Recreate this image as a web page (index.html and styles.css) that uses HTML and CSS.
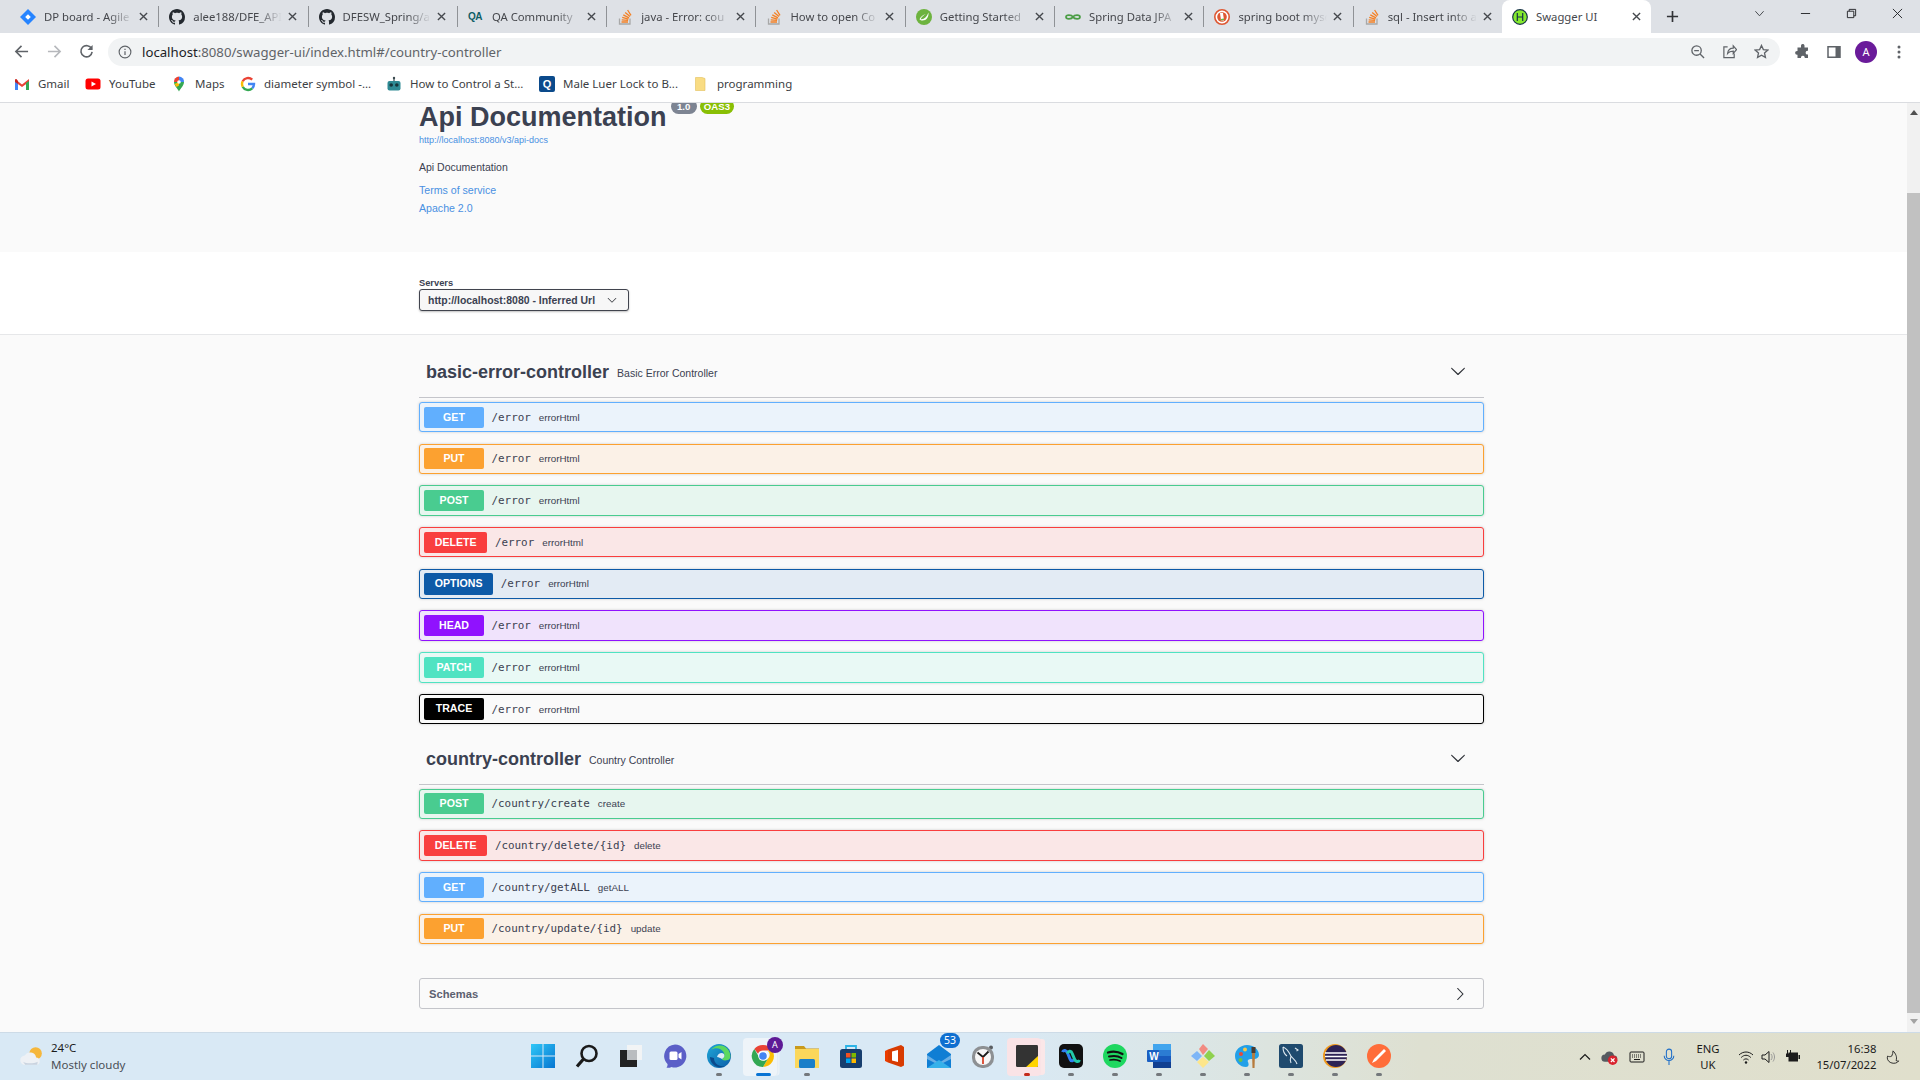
FILE: index.html
```html
<!DOCTYPE html>
<html lang="en">
<head>
<meta charset="utf-8">
<title>Swagger UI</title>
<link rel="stylesheet" href="styles.css">
</head>
<body>
<svg class="sprite" width="0" height="0">
  <defs>
    <symbol id="i-gh" viewBox="0 0 16 16"><path fill="#24292f" d="M8 0C3.58 0 0 3.58 0 8c0 3.54 2.29 6.53 5.47 7.59.4.07.55-.17.55-.38 0-.19-.01-.82-.01-1.49-2.01.37-2.53-.49-2.69-.94-.09-.23-.48-.94-.82-1.13-.28-.15-.68-.52-.01-.53.63-.01 1.08.58 1.23.82.72 1.21 1.87.87 2.33.66.07-.52.28-.87.51-1.07-1.78-.2-3.64-.89-3.64-3.95 0-.87.31-1.59.82-2.15-.08-.2-.36-1.02.08-2.12 0 0 .67-.21 2.2.82.64-.18 1.32-.27 2-.27s1.36.09 2 .27c1.53-1.04 2.2-.82 2.2-.82.44 1.1.16 1.92.08 2.12.51.56.82 1.27.82 2.15 0 3.07-1.87 3.75-3.65 3.95.29.25.54.73.54 1.48 0 1.07-.01 1.93-.01 2.2 0 .21.15.46.55.38A8.013 8.013 0 0016 8c0-4.42-3.58-8-8-8z"/></symbol>
    <symbol id="i-so" viewBox="0 0 16 16"><path fill="none" stroke="#a8a8a8" stroke-width="1.3" d="M2.5 9.5v5.5h10.5V9.5"/><path fill="none" stroke="#f48024" stroke-width="1.3" d="M4.5 13h6.5M4.7 10.8l6.4.6M5.2 8.4l6.2 1.7M6.3 5.9l5.7 3M8.2 3.4l4.8 4.2M10.6 1l3.4 5.4"/></symbol>
    <symbol id="i-x" viewBox="0 0 10 10"><path fill="none" stroke="#45484d" stroke-width="1.5" d="M1 1l8 8M9 1l-8 8"/></symbol>
    <symbol id="i-down" viewBox="0 0 20 20"><path fill="#2f3238" d="M17.418 6.109c.272-.268.709-.268.979 0s.271.701 0 .969l-7.908 7.83c-.27.268-.707.268-.979 0l-7.908-7.83c-.27-.268-.27-.701 0-.969.271-.268.709-.268.979 0L10 13.25l7.418-7.141z"/></symbol>
    <symbol id="i-right" viewBox="0 0 20 20"><path fill="#2f3238" d="M13.25 10L6.109 2.582c-.268-.27-.268-.707 0-.979.268-.27.701-.27.969 0l7.83 7.908c.268.271.268.709 0 .979l-7.83 7.908c-.268.271-.701.27-.969 0-.268-.269-.268-.707 0-.979L13.25 10z"/></symbol>
  </defs>
</svg>

<header class="tabstrip">
  <div class="tab"><svg class="fav" viewBox="0 0 16 16"><path fill="#2684ff" d="M8 0l8 8-8 8-8-8z"/><path fill="#fff" d="M8 5.2L10.8 8 8 10.8 5.2 8z"/></svg><span class="tab-title">DP board - Agile</span><svg class="tab-x"><use href="#i-x"/></svg></div>
  <div class="tab"><svg class="fav"><use href="#i-gh"/></svg><span class="tab-title">alee188/DFE_API</span><svg class="tab-x"><use href="#i-x"/></svg></div>
  <div class="tab"><svg class="fav"><use href="#i-gh"/></svg><span class="tab-title">DFESW_Spring/api</span><svg class="tab-x"><use href="#i-x"/></svg></div>
  <div class="tab"><span class="fav fav-qa">QA</span><span class="tab-title">QA Community</span><svg class="tab-x"><use href="#i-x"/></svg></div>
  <div class="tab"><svg class="fav"><use href="#i-so"/></svg><span class="tab-title">java - Error: cou</span><svg class="tab-x"><use href="#i-x"/></svg></div>
  <div class="tab"><svg class="fav"><use href="#i-so"/></svg><span class="tab-title">How to open Co</span><svg class="tab-x"><use href="#i-x"/></svg></div>
  <div class="tab"><svg class="fav" viewBox="0 0 16 16"><circle cx="8" cy="8" r="8" fill="#6db33f"/><path fill="#fff" d="M12.5 3.5c.3 4.5-2 8-6 8-1.3 0-2.2-.5-3-1.3 1-2.7 3.5-4.5 6.5-5-2.5 1-4.3 2.5-5.3 5 3.3.5 5.8-1.7 7.8-6.7z"/></svg><span class="tab-title">Getting Started</span><svg class="tab-x"><use href="#i-x"/></svg></div>
  <div class="tab"><svg class="fav" viewBox="0 0 16 16"><path fill="none" stroke="#4b9d45" stroke-width="1.7" d="M8 8C6.5 5.5 1 5.5 1 8s5.5 2.5 7 0 7-2.5 7 0-5.5 2.5-7 0z"/></svg><span class="tab-title">Spring Data JPA</span><svg class="tab-x"><use href="#i-x"/></svg></div>
  <div class="tab"><svg class="fav" viewBox="0 0 16 16"><circle cx="8" cy="8" r="7.2" fill="#fff" stroke="#de5833" stroke-width="1.6"/><circle cx="8" cy="8" r="4.8" fill="#de5833"/><path fill="#fff" d="M6 4h3l1 7.5H7z"/><path fill="#65bc46" d="M7 10l3-.6v1.6l-3 .4z"/></svg><span class="tab-title">spring boot mysql</span><svg class="tab-x"><use href="#i-x"/></svg></div>
  <div class="tab"><svg class="fav"><use href="#i-so"/></svg><span class="tab-title">sql - Insert into a</span><svg class="tab-x"><use href="#i-x"/></svg></div>
  <div class="tab tab-active"><svg class="fav" viewBox="0 0 16 16"><circle cx="8" cy="8" r="7.3" fill="#85ea2d" stroke="#173647" stroke-width="1.2"/><path fill="none" stroke="#173647" stroke-width="1.2" d="M5.3 4v8M10.7 4v8M5.3 8h5.4"/></svg><span class="tab-title">Swagger UI</span><svg class="tab-x"><use href="#i-x"/></svg></div>
  <svg class="newtab" viewBox="0 0 14 14"><path fill="none" stroke="#303236" stroke-width="1.8" d="M7 1v12M1 7h12"/></svg>
  <div class="winctl">
    <svg viewBox="0 0 12 12"><path fill="none" stroke="#3c3f44" d="M1.5 3.5L6 8.5l4.5-5"/></svg>
    <svg viewBox="0 0 12 12"><path fill="none" stroke="#202124" d="M1 6h10"/></svg>
    <svg viewBox="0 0 12 12"><path fill="none" stroke="#202124" d="M1.5 3.5h7v7h-7zM3.5 3.5v-2h7v7h-2"/></svg>
    <svg viewBox="0 0 12 12"><path fill="none" stroke="#202124" d="M1 1l10 10M11 1L1 11"/></svg>
  </div>
</header>

<div class="toolbar">
  <svg class="nav" viewBox="0 0 16 16"><path fill="none" stroke="#5f6368" stroke-width="1.7" d="M15 8H2M8 2L2 8l6 6"/></svg>
  <svg class="nav nav-fwd" viewBox="0 0 16 16"><path fill="none" stroke="#b6b8bc" stroke-width="1.7" d="M1 8h13M8 2l6 6-6 6"/></svg>
  <svg class="nav nav-reload" viewBox="0 0 16 16"><path fill="none" stroke="#5f6368" stroke-width="1.7" d="M13.4 5A6 6 0 1 0 14 8.5"/><path fill="#5f6368" d="M14.5 1v5.5H9z"/></svg>
  <div class="omnibox">
    <svg class="info-i" viewBox="0 0 16 16"><circle cx="8" cy="8" r="6.7" fill="none" stroke="#5f6368" stroke-width="1.3"/><path fill="#5f6368" d="M7.3 7h1.4v4.5H7.3zM7.3 4.3h1.4v1.4H7.3z"/></svg>
    <span class="url"><b>localhost</b>:8080/swagger-ui/index.html#/country-controller</span>
    <svg class="omni-act" viewBox="0 0 16 16"><circle cx="7" cy="7" r="5" fill="none" stroke="#5f6368" stroke-width="1.4"/><path fill="none" stroke="#5f6368" stroke-width="1.4" d="M10.7 10.7L15 15M4.5 7h5"/></svg>
    <svg class="omni-act" viewBox="0 0 16 16"><path fill="none" stroke="#5f6368" stroke-width="1.3" d="M6 3H2v11.5h11V10M6 10c.5-4 3-5.5 6-5.5V2l3.5 4-3.5 4V7.500c-2.500 0-4.500.5-6 2.500z"/></svg>
    <svg class="omni-act" viewBox="0 0 16 16"><path fill="none" stroke="#5f6368" stroke-width="1.4" d="M8 1.5l2 4.4 4.8.5-3.6 3.2 1 4.700L8 11.900l-4.200 2.400 1-4.700-3.600-3.200 4.800-.5z"/></svg>
  </div>
  <svg class="tool tool-ext" viewBox="0 0 16 16"><path fill="#5f6368" d="M6 1.5a1.8 1.8 0 0 1 3.5 0V3.5H13v3.3h-.5a1.9 1.9 0 0 0 0 3.8h.5V14H9.7v-.7a1.9 1.9 0 0 0-3.700 0v.7H2.500v-3.300H2a1.900 1.900 0 0 1 0-3.800h.5V3.500H6z"/></svg>
  <svg class="tool tool-side" viewBox="0 0 16 16"><path fill="none" stroke="#5f6368" stroke-width="1.5" d="M2 2.8h12v10.400H2z"/><path fill="#5f6368" d="M9.500 2.800H14v10.400H9.500z"/></svg>
  <span class="avatar">A</span>
  <svg class="tool" viewBox="0 0 16 16"><g fill="#5f6368"><circle cx="8" cy="3" r="1.5"/><circle cx="8" cy="8" r="1.5"/><circle cx="8" cy="13" r="1.5"/></g></svg>
</div>

<nav class="bookmarks">
  <span class="bm bm-gmail"><svg viewBox="0 0 16 16"><path fill="#ea4335" d="M1 3l7 5.5L15 3v3L8 11 1 6z"/><path fill="#4285f4" d="M1 5v9h3V7z"/><path fill="#34a853" d="M15 5v9h-3V7z"/><path fill="#c5221f" d="M1 3.8V6l3 2V5L2.5 3z"/></svg>Gmail</span>
  <span class="bm bm-yt"><svg viewBox="0 0 16 16"><rect x=".5" y="2.5" width="15" height="11" rx="2.5" fill="#f00"/><path fill="#fff" d="M6.5 5.500L11 8l-4.500 2.500z"/></svg>YouTube</span>
  <span class="bm bm-maps"><svg viewBox="0 0 16 16"><path fill="#34a853" d="M8 15.500C6.500 12.500 3 9.500 3 6h10c0 3.500-3.500 6.500-5 9.500z"/><path fill="#4285f4" d="M8 .5A5 5 0 0 1 13 6H8z"/><path fill="#ea4335" d="M8 .5A5 5 0 0 0 3 6h5z"/><path fill="#fbbc04" d="M3.500 8L8 6v3.500L5.500 11z"/><circle cx="8" cy="6" r="1.800" fill="#fff"/></svg>Maps</span>
  <span class="bm bm-g"><svg viewBox="0 0 16 16"><path fill="none" stroke="#4285f4" stroke-width="2.4" d="M8 8h6a6 6 0 0 1-1.800 4.300"/><path fill="none" stroke="#34a853" stroke-width="2.4" d="M12.200 12.300A6 6 0 0 1 2.700 10.700"/><path fill="none" stroke="#fbbc05" stroke-width="2.4" d="M2.700 10.700a6 6 0 0 1 0-5.400"/><path fill="none" stroke="#ea4335" stroke-width="2.4" d="M2.700 5.300A6 6 0 0 1 12.200 3.700"/></svg>diameter symbol -...</span>
  <span class="bm bm-robot"><svg viewBox="0 0 16 16"><path fill="none" stroke="#3b4a4f" stroke-width="1.2" d="M8 5V2"/><circle cx="8" cy="2" r="1.2" fill="#3b4a4f"/><rect x="1.5" y="5" width="13" height="9.5" rx="2" fill="#2e8a94"/><circle cx="5.2" cy="9" r="1.8" fill="#16343a"/><circle cx="10.8" cy="9" r="1.8" fill="#16343a"/></svg>How to Control a St...</span>
  <span class="bm bm-q"><span class="q-ico">Q</span>Male Luer Lock to B...</span>
  <span class="bm bm-folder"><svg viewBox="0 0 16 16"><path fill="#f9dc83" stroke="#e2bf5b" stroke-width=".6" d="M2.500 1.500h6.500l3 1v12h-9.500z"/></svg>programming</span>
</nav>

<div class="viewport">
  <main class="page">
    <section class="info">
      <div class="wrap">
        <div class="title-row">
          <h1 class="title">Api Documentation</h1>
          <span class="pill pill-ver">1.0</span>
          <span class="pill pill-oas">OAS3</span>
        </div>
        <a class="spec-url">http://localhost:8080/v3/api-docs</a>
        <p class="desc">Api Documentation</p>
        <a class="link link-terms">Terms of service</a>
        <a class="link link-lic">Apache 2.0</a>
      </div>
    </section>

    <section class="schemes">
      <div class="wrap">
        <div class="servers-label">Servers</div>
        <div class="select">http://localhost:8080 - Inferred Url<svg class="select-arrow"><use href="#i-down"/></svg></div>
      </div>
    </section>

    <section class="ops wrap">
      <div class="tag tag-first">
        <h3 class="tag-name">basic-error-controller</h3>
        <span class="tag-desc">Basic Error Controller</span>
        <svg class="tag-arrow"><use href="#i-down"/></svg>
      </div>
      <div class="op op-get"><span class="method">GET</span><span class="path">/error</span><span class="opid">errorHtml</span></div>
      <div class="op op-put"><span class="method">PUT</span><span class="path">/error</span><span class="opid">errorHtml</span></div>
      <div class="op op-post"><span class="method">POST</span><span class="path">/error</span><span class="opid">errorHtml</span></div>
      <div class="op op-delete"><span class="method">DELETE</span><span class="path">/error</span><span class="opid">errorHtml</span></div>
      <div class="op op-options"><span class="method">OPTIONS</span><span class="path">/error</span><span class="opid">errorHtml</span></div>
      <div class="op op-head"><span class="method">HEAD</span><span class="path">/error</span><span class="opid">errorHtml</span></div>
      <div class="op op-patch"><span class="method">PATCH</span><span class="path">/error</span><span class="opid">errorHtml</span></div>
      <div class="op op-trace"><span class="method">TRACE</span><span class="path">/error</span><span class="opid">errorHtml</span></div>

      <div class="tag">
        <h3 class="tag-name">country-controller</h3>
        <span class="tag-desc">Country Controller</span>
        <svg class="tag-arrow"><use href="#i-down"/></svg>
      </div>
      <div class="op op-post"><span class="method">POST</span><span class="path">/country/create</span><span class="opid">create</span></div>
      <div class="op op-delete"><span class="method">DELETE</span><span class="path">/country/delete/{id}</span><span class="opid">delete</span></div>
      <div class="op op-get"><span class="method">GET</span><span class="path">/country/getALL</span><span class="opid">getALL</span></div>
      <div class="op op-put"><span class="method">PUT</span><span class="path">/country/update/{id}</span><span class="opid">update</span></div>

      <div class="schemas"><span>Schemas</span><svg class="schemas-arrow"><use href="#i-right"/></svg></div>
    </section>
  </main>
  <aside class="scrollbar">
    <span class="sb-up"></span>
    <span class="sb-thumb"></span>
    <span class="sb-down"></span>
  </aside>
</div>

<footer class="taskbar">
  <div class="weather">
    <svg class="weather-ico" viewBox="0 0 24 24"><circle cx="15" cy="9" r="6" fill="#f6b73c"/><path fill="#eef1f5" d="M5 20a4.500 4.500 0 0 1-.5-9 6 6 0 0 1 11 2 3.600 3.600 0 0 1 1 7z"/><path fill="#c9d3df" d="M3 17c3 2 10 2 14 0l-.5 3H5z"/></svg>
    <div class="weather-text"><span class="w-temp">24°C</span><span class="w-desc">Mostly cloudy</span></div>
  </div>
  <div class="tb-icons">
    <div class="tb"><svg viewBox="0 0 24 24"><defs><linearGradient id="gw" x1="0" y1="0" x2="1" y2="1"><stop offset="0" stop-color="#2fc7f7"/><stop offset="1" stop-color="#0776d1"/></linearGradient></defs><path fill="url(#gw)" d="M0 0h11.500v11.500H0zM12.500 0H24v11.500H12.500zM0 12.500h11.500V24H0zM12.500 12.500H24V24H12.500z"/></svg></div>
    <div class="tb"><svg viewBox="0 0 24 24"><circle cx="14" cy="9.500" r="7.500" fill="none" stroke="#1a1a1a" stroke-width="2.600"/><path stroke="#1a1a1a" stroke-width="3.200" d="M8.500 15L2 22.500"/></svg></div>
    <div class="tb"><svg viewBox="0 0 24 24"><rect x="8" y="1" width="15" height="15" fill="#f2f4f5"/><rect x="1" y="6" width="17" height="17" fill="#222"/><rect x="8" y="6" width="10" height="10" fill="#b9bcbf"/></svg></div>
    <div class="tb"><svg viewBox="0 0 24 24"><path fill="#5b5fc7" d="M12 .5a11.500 11.500 0 1 1-3.500 22.500c-2 1-4 1-5 .5 1-1 1.200-2.200 1-3.500A11.500 11.500 0 0 1 12 .5z"/><rect x="6.500" y="7.500" width="8" height="8.500" rx="1.500" fill="#fff"/><path fill="#fff" d="M15.500 10l3-2v7.500l-3-2z"/></svg></div>
    <div class="tb has-dot"><svg viewBox="0 0 24 24"><defs><linearGradient id="ge" x1="0" y1="0" x2="1" y2="1"><stop offset="0" stop-color="#1fa7d8"/><stop offset="1" stop-color="#0b5da8"/></linearGradient></defs><circle cx="12" cy="12" r="12" fill="url(#ge)"/><path fill="#5cd85f" d="M4 6c5-6 14-6 18 1 2 4 2 8-1 9-4 1-6 0-6-1 2-1 3-3 2-6-2-5-9-6-13-3z"/><path fill="#dcebf5" d="M10 13c1-4 5-5 7-3 1 2 0 4-2 5-2-1-3-2-5-2z"/><path fill="#0a4a8c" d="M7 14c0 5 4 9 11 8-7 4-15-2-15-9z"/></svg><i class="dot"></i></div>
    <div class="tb tb-active"><svg viewBox="0 0 24 24"><path fill="#ea4335" d="M12 1a11 11 0 0 1 9.500 5.500H12a5.500 5.500 0 0 0-5 3.300L3.300 5A11 11 0 0 1 12 1z"/><path fill="#fbbc04" d="M21.500 6.500A11 11 0 0 1 12 23l4.700-8a5.500 5.500 0 0 0 0-8.500z"/><path fill="#34a853" d="M3.300 5L8 13a5.500 5.500 0 0 0 8.700 2L12 23A11 11 0 0 1 3.300 5z"/><circle cx="12" cy="12" r="4.800" fill="#fff"/><circle cx="12" cy="12" r="3.800" fill="#4285f4"/></svg><span class="tb-badge tb-badge-a">A</span><i class="dot dot-active"></i></div>
    <div class="tb has-dot"><svg viewBox="0 0 24 24"><path fill="#c99a1c" d="M0 2h9l2 2.500h13V8H0z"/><path fill="#fbd75b" d="M0 5h24v19H0z"/><rect x="4" y="15" width="16" height="9" rx="1.500" fill="#1a7fc9"/></svg><i class="dot"></i></div>
    <div class="tb"><svg viewBox="0 0 24 24"><path fill="none" stroke="#2cb3e6" stroke-width="1.800" d="M7 6V2h10v4"/><rect x="1" y="5" width="22" height="19" rx="2.500" fill="#173e6e"/><path fill="#f25022" d="M7 9h4.500v4.500H7z"/><path fill="#7fba00" d="M12.500 9H17v4.500h-4.500z"/><path fill="#00a4ef" d="M7 14.500h4.500V19H7z"/><path fill="#ffb900" d="M12.500 14.500H17V19h-4.500z"/></svg></div>
    <div class="tb"><svg viewBox="0 0 24 24"><path fill="#d83b01" d="M18 1L5 5.500v13L18 23l3-1.500V3z"/><path fill="#eb3c00" d="M5 5.500V18.500L2 17V7z"/><path fill="#fff" d="M9 7.500l6-1.500v12l-6-1.500z"/></svg></div>
    <div class="tb"><svg viewBox="0 0 24 24"><path fill="#0f7ed4" d="M0 10L12 1l12 9v14H0z"/><path fill="#d6eafb" d="M0 11l12 8 12-8v4l-12 6-12-6z" opacity=".45"/><path fill="#35b1ea" d="M0 24l12-8 12 8z"/></svg><span class="tb-badge tb-badge-n">53</span></div>
    <div class="tb"><svg viewBox="0 0 24 24"><circle cx="20" cy="3.500" r="2" fill="#5a5d61"/><rect x="1" y="2" width="22" height="22" rx="10" fill="#8d9093"/><circle cx="12" cy="13" r="8" fill="#f7f7f7"/><path fill="none" stroke="#1b1b1b" stroke-width="1.800" d="M6.500 8.500L12 13l5.500-5.500"/><path fill="none" stroke="#d8442a" stroke-width="1.800" d="M12 13v7"/></svg></div>
    <div class="tb tb-sticky"><svg viewBox="0 0 24 24"><rect x="0" y="0" width="24" height="24" rx="1.500" fill="#333"/><path fill="#ffd400" d="M11 24L24 12v10.500a1.500 1.500 0 0 1-1.500 1.500z"/></svg><i class="dot dot-red"></i></div>
    <div class="tb has-dot"><svg viewBox="0 0 24 24"><rect width="24" height="24" rx="5" fill="#111"/><path fill="none" stroke="#2f7ff2" stroke-width="3" d="M3.500 8c1-2.500 4-2 5 1l2.500 6c1 3 4 2 4.500-.5"/><path fill="none" stroke="#22c9a9" stroke-width="3" d="M20.500 16c-1 2.500-4 2-5-1L13 9c-1-3-4-2-4.500.5"/></svg><i class="dot"></i></div>
    <div class="tb has-dot"><svg viewBox="0 0 24 24"><circle cx="12" cy="12" r="12" fill="#1ed760"/><path fill="none" stroke="#111" stroke-linecap="round" stroke-width="2.300" d="M5 8.500c5-1.500 10-1 14.500 1.500"/><path fill="none" stroke="#111" stroke-linecap="round" stroke-width="2" d="M6 12.500c4.500-1 9-.8 12.500 1.500"/><path fill="none" stroke="#111" stroke-linecap="round" stroke-width="1.700" d="M7 16c3.500-.8 7-.5 10 1"/></svg><i class="dot"></i></div>
    <div class="tb has-dot tb-word"><svg viewBox="0 0 24 24"><path fill="#41a5ee" d="M6 0h18v6H6z"/><path fill="#2b7cd3" d="M6 6h18v6H6z"/><path fill="#185abd" d="M6 12h18v6H6z"/><path fill="#103f91" d="M6 18h18v6H6z"/><rect y="6" width="12" height="12" rx="1" fill="#1a5fc2"/></svg><span class="word-w">W</span><i class="dot"></i></div>
    <div class="tb has-dot"><svg viewBox="0 0 24 24"><path fill="#f28b82" d="M12 0l5 5-5 6-4-6z"/><path fill="#8fd14f" d="M18 6l6 6-6 5-5-5z"/><path fill="#7db6f7" d="M6 7l5 5-5 5-6-5z"/><path fill="#fde68a" d="M12 13l6 5-6 6-6-6z"/></svg><i class="dot"></i></div>
    <div class="tb has-dot"><svg viewBox="0 0 24 24"><path fill="#22a0e8" d="M12 1C5 1 0 6 0 12s5 11 11 11c3 0 3-3 2-5-1-2 1-3 3-3h3c3 0 5-2 5-4C24 5 18 1 12 1z"/><circle cx="6" cy="10" r="2" fill="#e64a3a"/><circle cx="10" cy="5.500" r="2" fill="#f7c948"/><circle cx="5.500" cy="16" r="2" fill="#6cc04a"/><path fill="#b77b3c" d="M17 9h3l-.5 15H17.500z"/><path fill="#4b3a2f" d="M16.500 3h4v6h-4z"/></svg><i class="dot"></i></div>
    <div class="tb has-dot"><svg viewBox="0 0 24 24"><rect width="24" height="24" rx="2.500" fill="#1f4a6e"/><path fill="none" stroke="#dfe9f0" stroke-width="1.100" d="M4 3c3 1 6 5 8 9 2 3 5 4 6 8M4 3c0 4 1 7 4 9M12 12c-1 3-1 5 0 7M16 4l3 2-1.500 1"/></svg><i class="dot"></i></div>
    <div class="tb has-dot"><svg viewBox="0 0 24 24"><circle cx="12" cy="12" r="12" fill="#f09a1f"/><circle cx="13" cy="12" r="11" fill="#2c2255"/><path fill="none" stroke="#fff" stroke-width="1.700" d="M2 9h22M2 12.500h22M3 16h20"/></svg><i class="dot"></i></div>
    <div class="tb has-dot"><svg viewBox="0 0 24 24"><circle cx="12" cy="12" r="12" fill="#ff6d3a"/><path fill="#fff" d="M17 5l2 2L9 17l-4 2 2-4z"/></svg><i class="dot"></i></div>
  </div>
  <div class="tray">
    <svg class="t-chev" viewBox="0 0 12 12"><path fill="none" stroke="#1b1b1b" stroke-width="1.200" d="M1 8.500L6 3.500l5 5"/></svg>
    <span class="t-cloud"><svg viewBox="0 0 16 16"><path fill="#555a60" d="M4 13a3.500 3.500 0 0 1-.3-7 4.500 4.500 0 0 1 8.600 1 3 3 0 0 1 0 6z"/><circle cx="11" cy="11.500" r="4.500" fill="#d9232e"/><path stroke="#fff" stroke-width="1.200" d="M9.300 9.800l3.400 3.400M12.700 9.800l-3.400 3.400"/></svg></span>
    <svg class="t-kbd" viewBox="0 0 16 16"><rect x="1" y="3" width="14" height="10" rx="1" fill="none" stroke="#1b1b1b"/><path stroke="#1b1b1b" stroke-dasharray="1 1" d="M3 6h10M3 8h10"/><path stroke="#1b1b1b" d="M5 10.500h6"/></svg>
    <svg class="t-mic" viewBox="0 0 16 20"><rect x="5" y="1" width="6" height="11" rx="3" fill="none" stroke="#1f6fc9" stroke-width="1.200"/><path fill="none" stroke="#1f6fc9" stroke-width="1.200" d="M2.500 8.500a5.500 5.500 0 0 0 11 0M8 14v5"/></svg>
    <div class="lang"><span>ENG</span><span>UK</span></div>
    <svg class="t-wifi" viewBox="0 0 16 16"><path fill="none" stroke="#1b1b1b" d="M1 6c4-4 10-4 14 0M3.200 8.500c3-3 6.600-3 9.600 0M5.400 11c1.500-1.500 3.700-1.500 5.200 0"/><circle cx="8" cy="13.500" r="1.200" fill="#1b1b1b"/></svg>
    <svg class="t-vol" viewBox="0 0 16 16"><path fill="none" stroke="#1b1b1b" d="M2 6h3l4-3.500v11L5 10H2z"/><path fill="none" stroke="#9a9a98" d="M11 5c1.500 2 1.500 4 0 6M13 3.500c2 3 2 6 0 9"/></svg>
    <svg class="t-bat" viewBox="0 0 16 16"><rect x="4" y="3.500" width="9.500" height="9" fill="#1b1b1b"/><rect x="14" y="6" width="1.500" height="4" fill="#1b1b1b"/><path stroke="#1b1b1b" d="M3 1v4M6 1v4"/><path fill="#1b1b1b" d="M1.500 4.500h6V8h-6z"/></svg>
    <div class="clock"><span>16:38</span><span>15/07/2022</span></div>
    <svg class="t-moon" viewBox="0 0 16 16"><path fill="none" stroke="#1b1b1b" d="M8 1c3 3 5 7 3.500 11 1 .7 2 .8 3 .5C13 15 9 16 5.500 14.500 2 13 .8 9.500 1.800 7 3 7.500 5 8 6.500 7 7.500 5 8 3 8 1z"/></svg>
  </div>
</footer>
</body>
</html>
```

FILE: styles.css
```css
* { box-sizing: border-box; }
html, body { margin: 0; height: 100%; }
body {
  width: 1920px; height: 1080px; overflow: hidden;
  display: flex; flex-direction: column;
  font-family: "Liberation Sans", Arial, sans-serif;
  color: #3b4151; background: #fafafa;
}
.sprite { position: absolute; }
h1, h3, p { margin: 0; }

/* ---- browser chrome ---- */
.tabstrip {
  height: 33px; flex: none; background: #dee1e6;
  display: flex; align-items: center; padding-left: 10px;
  font-family: "Noto Sans", "Open Sans", sans-serif;
}
.tab {
  width: 149.3px; height: 100%; flex: none;
  display: flex; align-items: center; padding: 0 10.5px 0 10px;
  border-right: 1px solid #8f9296;
  border-image: linear-gradient(#dee1e6 7px, #8f9296 7px, #8f9296 26px, #dee1e6 26px) 1;
}
.tab-active {
  background: #fff; border: 0; border-radius: 8px 8px 0 0;
  margin-left: -1px; height: 33px; align-self: flex-end;
}
.tab:nth-child(10) { border-right: 0; }
.fav { width: 16px; height: 16px; flex: none; margin-right: 8px; }
.fav-qa { font: bold 10px/16px "Liberation Sans", sans-serif; color: #0f5e66; letter-spacing: -.5px; }
.tab-title {
  flex: 1; min-width: 0; font-size: 11.3px; color: #45474c; white-space: nowrap; overflow: hidden;
  -webkit-mask-image: linear-gradient(90deg, #000 72%, transparent 100%);
  mask-image: linear-gradient(90deg, #000 72%, transparent 100%);
}
.tab-active .tab-title { -webkit-mask-image: none; mask-image: none; }
.tab-x { width: 9px; height: 9px; flex: none; margin-left: 6px; }
.newtab { width: 13px; height: 13px; flex: none; margin-left: 15px; }
.winctl { margin-left: auto; display: flex; align-items: center; width: 179px; padding-left: 13px; margin-top: -6px; }
.winctl svg { width: 11px; height: 11px; margin-left: 35px; flex: none; }
.winctl svg:first-child { margin-left: 0; }

.toolbar {
  height: 37px; flex: none; background: #fff;
  display: flex; align-items: center; padding-left: 14px;
}
.nav { width: 15px; height: 15px; flex: none; margin-right: 18px; }
.nav-fwd { margin-right: 17px; }
.nav-reload { margin-right: 14px; }
.omnibox {
  width: 1672px; height: 28px; flex: none; border-radius: 14px; background: #f1f3f4;
  display: flex; align-items: center; padding: 0 11px 0 10px;
  margin-right: 15px;
}
.info-i { width: 14px; height: 14px; flex: none; margin-right: 10px; }
.url { font: 13.2px "Noto Sans", sans-serif; color: #5f6368; flex: 1; white-space: nowrap; }
.url b { font-weight: 400; color: #202124; }
.omni-act { width: 15px; height: 15px; flex: none; margin-left: 17px; }
.tool { width: 16px; height: 16px; flex: none; margin-right: 16px; }
.tool-ext { margin-right: 15px; }
.tool-side { margin-right: 13px; }
.avatar {
  width: 22px; height: 22px; flex: none; border-radius: 50%; background: #6a1b9a; color: #fff;
  font: 11px/22px "Noto Sans", sans-serif; text-align: center; margin-right: 14px;
}

.bookmarks {
  height: 33px; flex: none; background: #fff; border-bottom: 1px solid #dadce0;
  display: flex; align-items: center; padding: 0 0 5px 14px;
  font: 11.5px "Noto Sans", sans-serif; color: #3c4043;
}
.bm { display: flex; align-items: center; white-space: nowrap; }
.bm svg, .q-ico { width: 16px; height: 16px; flex: none; margin-right: 8px; }
.q-ico { background: #0b4a8b; color: #fff; font: bold 11px/16px "Liberation Sans", sans-serif; text-align: center; border-radius: 2px; }
.bm-gmail { width: 71px; }
.bm-yt { width: 86px; }
.bm-maps { width: 69px; }
.bm-g { width: 146px; }
.bm-robot { width: 153px; }
.bm-q { width: 154px; }

/* ---- page ---- */
.viewport { flex: 1; min-height: 0; display: flex; background: #fafafa; }
.page { flex: 1; min-width: 0; overflow: hidden; }
.wrap { width: 1065px; margin-left: 419px; }
.info { height: 149px; background: #fafafa; }
.title-row { display: flex; height: 24px; align-items: flex-start; }
.title { font-size: 27px; line-height: 28px; margin-top: 0; font-weight: 700; color: #3b4151; white-space: nowrap; }
.pill {
  height: 15px; margin-top: -4px; border-radius: 8px; color: #fff;
  font: bold 9.6px/15px "Liberation Sans", sans-serif; margin-left: 3px;
}
.pill-ver { background: #7d8492; margin-left: 4px; padding: 0 6.5px; }
.pill-oas { background: #89bf04; padding: 0 4px; }
.spec-url { display: block; margin-top: 7px; font-size: 9px; line-height: 12px; color: #4990e2; }
.desc { margin-top: 14px; font-size: 10.5px; line-height: 14px; color: #3b4151; }
.link { display: block; font-size: 10.6px; line-height: 14px; color: #4990e2; }
.link-terms { margin-top: 9px; }
.link-lic { margin-top: 4px; }

.schemes { height: 83px; background: #fff; border-bottom: 1px solid #e6e7e9; padding-top: 25px; }
.servers-label { font-size: 9.3px; line-height: 12px; font-weight: 700; color: #3b4151; }
.select {
  width: 210px; height: 22px; border: 1.5px solid #41444e; border-radius: 3px; background: #f7f7f7;
  box-shadow: 0 1px 2px rgba(0,0,0,.25);
  display: flex; align-items: center; padding-left: 8px;
  font-size: 10.45px; font-weight: 700; color: #3b4151; white-space: nowrap;
}
.select-arrow { width: 10px; height: 10px; margin-left: auto; margin-right: 11px; }

.tag {
  display: flex; align-items: center; height: 38px; padding: 0 21px 13px 7px;
  border-bottom: 1px solid #c4c5ca; margin-top: 22.7px; margin-bottom: 3.7px;
}
.tag-first { margin-top: 25px; margin-bottom: 4px; }
.tag-name { font-size: 18px; line-height: 24px; font-weight: 700; color: #3b4151; white-space: nowrap; }
.tag-desc { font-size: 10.5px; margin-left: 8px; margin-top: 2px; color: #3b4151; }
.tag-arrow { width: 16px; height: 16px; margin-left: auto; margin-top: -2px; margin-right: -3px; }

.op {
  display: flex; align-items: center; height: 30.4px; margin-bottom: 11.3px;
  border: 1px solid; border-radius: 3px; padding: 0 4px;
  box-shadow: 0 0 3px rgba(0,0,0,.19);
}
.method {
  min-width: 60px; height: 21.2px; padding: 0 10.8px; border-radius: 2px; color: #fff;
  font-size: 10.6px; line-height: 21.2px; font-weight: 700; text-align: center; flex: none;
}
.path { margin-left: 7.5px; font-family: "DejaVu Sans Mono", monospace; font-size: 10.9px; color: #3b4151; white-space: nowrap; }
.opid { margin-left: 8px; font-size: 9.8px; color: #3b4151; }

.op-get { border-color: #61affe; background: #ebf3fb; }
.op-get .method { background: #61affe; }
.op-put { border-color: #fca130; background: #fbf1e7; }
.op-put .method { background: #fca130; }
.op-post { border-color: #49cc90; background: #e7f6ef; }
.op-post .method { background: #49cc90; }
.op-delete { border-color: #f93e3e; background: #fae7e7; }
.op-delete .method { background: #f93e3e; }
.op-options { border-color: #0d5aa7; background: #e3ebf4; }
.op-options .method { background: #0d5aa7; }
.op-head { border-color: #9012fe; background: #f0e3fc; }
.op-head .method { background: #9012fe; }
.op-patch { border-color: #50e3c2; background: #e9f9f5; }
.op-patch .method { background: #50e3c2; }
.op-trace { border-color: #000; background: #fafafa; }
.op-trace .method { background: #000; }

.schemas {
  display: flex; align-items: center; height: 31px; margin-top: 34px; padding: 0 10px 0 9px;
  border: 1px solid #c4c5ca; border-radius: 3px;
  font-size: 11.2px; font-weight: 700; color: #5c6070;
}
.schemas-arrow { width: 14px; height: 14px; margin-left: auto; margin-right: 6px; }

.scrollbar { width: 13px; flex: none; background: #f1f1f1; display: flex; flex-direction: column; align-items: center; }
.sb-up { width: 0; height: 0; margin-top: 7px; border: 4px solid transparent; border-top: 0; border-bottom: 5px solid #505050; }
.sb-thumb { width: 13px; height: 820px; margin-top: 78px; background: #c1c1c1; }
.sb-down { width: 0; height: 0; margin-top: 6px; border: 4px solid transparent; border-bottom: 0; border-top: 5px solid #a3a3a3; }

/* ---- taskbar ---- */
.taskbar {
  height: 48px; flex: none; display: flex; align-items: flex-start;
  border-top: 1px solid #cddbe7;
  background: linear-gradient(90deg, #d9e9f5 0, #d9e9f5 52%, #dbe6e6 62%, #dee0d1 74%, #e0dfcc 100%);
  font-family: "Noto Sans", sans-serif; color: #1b1b1b;
}
.weather { width: 521px; flex: none; display: flex; padding: 7px 0 0 20px; }
.weather-ico { width: 25px; height: 25px; margin-top: 4px; flex: none; }
.weather-text { display: flex; flex-direction: column; margin-left: 6px; font-size: 11.5px; line-height: 16.5px; }
.w-desc { color: #4a4f55; }
.tb-icons { width: 880px; flex: none; display: flex; }
.tb {
  width: 44px; height: 47px; flex: none; position: relative;
  display: flex; flex-direction: column; align-items: center; padding-top: 11px;
}
.tb > svg { width: 24px; height: 24px; position: relative; }
.tb-sticky > svg { width: 22px; height: 22px; margin: 1px 0; }
.dot { position: relative; display: block; width: 6px; height: 3px; border-radius: 2px; background: #74787c; margin-top: 4.5px; }
.dot-active { width: 15px; background: #0a74d4; }
.dot-red { width: 6px; background: #c42b1c; }
.tb-active::before, .tb-sticky::before {
  content: ""; position: absolute; left: 2px; top: 5px; width: 34px; height: 38px; border-radius: 4px;
  background: #eef4f9; box-shadow: 2px 0 0 -0.5px #e4edf5, 3px 0 0 -0.5px #eef4f9;
}
.tb-sticky::before { background: #fae3e6; box-shadow: 5px 0 0 -1px #fbe7e8; }
.tb-badge { position: absolute; border-radius: 50%; color: #fff; text-align: center; }
.tb-badge-a { left: 26px; top: 4px; width: 16px; height: 16px; background: #5e1a96; font-size: 9px; line-height: 16px; }
.tb-badge-n { left: 23px; top: 0; width: 20px; height: 15px; border-radius: 8px; background: #0f6fd0; font-size: 10.5px; line-height: 15px; }
.word-w { position: absolute; left: 10.5px; top: 16.5px; width: 13px; color: #fff; font: bold 10px/14px "Liberation Sans", sans-serif; text-align: center; }

.tray { flex: 1; display: flex; align-items: center; height: 47px; padding-left: 178px; }
.t-chev { width: 12px; height: 12px; flex: none; }
.t-cloud { margin-left: 10px; display: flex; }
.t-cloud svg { width: 17px; height: 17px; }
.t-kbd { width: 16px; height: 16px; flex: none; margin-left: 11px; }
.t-mic { width: 14px; height: 20px; flex: none; margin-left: 17px; }
.lang { display: flex; flex-direction: column; align-items: center; width: 32px; margin-left: 16px; font-size: 11.3px; line-height: 16px; }
.t-wifi { width: 16px; height: 16px; flex: none; margin-left: 13.5px; }
.t-vol { width: 16px; height: 16px; flex: none; margin-left: 6px; }
.t-bat { width: 17px; height: 16px; flex: none; margin-left: 8px; }
.clock { display: flex; flex-direction: column; align-items: flex-end; width: 64px; margin-left: 12px; font-size: 11.3px; line-height: 16px; }
.t-moon { width: 14px; height: 16px; flex: none; margin-left: 9px; }
```
